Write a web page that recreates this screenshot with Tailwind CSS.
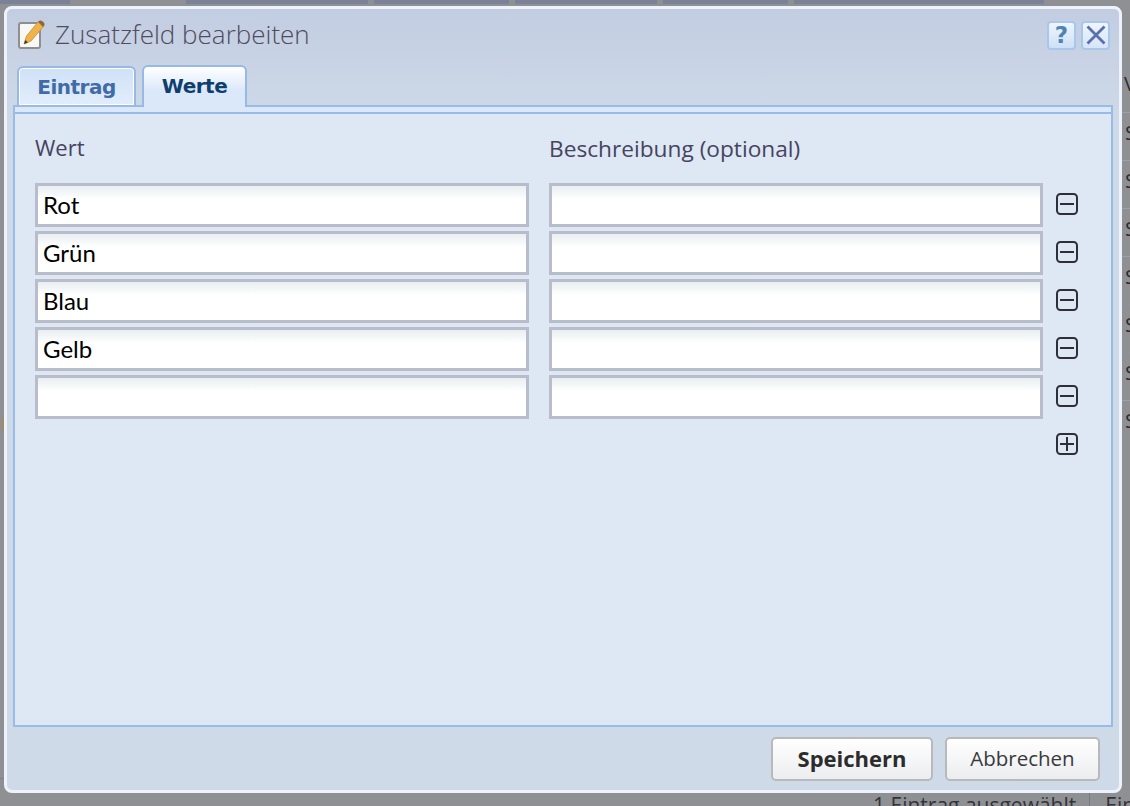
<!DOCTYPE html>
<html lang="de">
<head>
  <meta charset="UTF-8" />
  <title>Zusatzfeld bearbeiten</title>
  <script src="https://cdn.jsdelivr.net/npm/@tailwindcss/browser@4"></script>
</head>
<body class="relative w-[1130px] h-[806px] overflow-hidden bg-[#8f9094] font-['Open_Sans',sans-serif]">

  <!-- page behind the dialog -->
  <div class="absolute left-0 top-0 w-full flex h-[4px] gap-[6px]">
    <div class="w-[70px] bg-[#7b8196]"></div>
    <div class="w-[104px]"></div>
    <div class="w-[182px] bg-[#7b8196]"></div>
    <div class="w-[135px] bg-[#7b8196]"></div>
    <div class="w-[142px] bg-[#7b8196]"></div>
    <div class="w-[125px] bg-[#7b8196]"></div>
    <div class="w-[250px] bg-[#7b8196]"></div>
    <div class="flex-1"></div>
  </div>
  <div class="absolute left-[1124px] top-[71px] text-[20px] leading-[26px] text-[#2c2c2c]">V</div>
  <div class="absolute left-[1122px] top-[112px] w-[8px] flex flex-col">
    <div class="h-[48px] border-t border-[#a0a0a4] pl-[3px] text-[20px] leading-[40px] text-[#2c2c2c]">S</div>
    <div class="h-[48px] border-t border-[#a0a0a4] pl-[3px] text-[20px] leading-[40px] text-[#2c2c2c]">S</div>
    <div class="h-[48px] border-t border-[#a0a0a4] pl-[3px] text-[20px] leading-[40px] text-[#2c2c2c]">S</div>
    <div class="h-[48px] border-t border-[#a0a0a4] pl-[3px] text-[20px] leading-[40px] text-[#2c2c2c]">S</div>
    <div class="h-[48px] border-t border-[#8c92a6] pl-[3px] text-[20px] leading-[40px] text-[#2c2c2c]">S</div>
    <div class="h-[48px] border-t border-[#8c92a6] pl-[3px] text-[20px] leading-[40px] text-[#2c2c2c]">S</div>
    <div class="h-[48px] border-t border-[#a0a0a4] pl-[3px] text-[20px] leading-[40px] text-[#2c2c2c]">S</div>
  </div>
  <div class="absolute left-[2px] top-[417px] w-[2px] h-[13px] bg-[#a88a60]"></div>
  <div class="absolute left-0 top-[778px] w-[4px] h-px bg-[#7b8196]"></div>
  <div class="absolute left-[873px] top-[792px] flex items-center text-[21px] leading-[26px] text-[#33343a] whitespace-nowrap">
    <span>1 Eintrag ausgewählt</span>
    <span class="w-px h-[24px] bg-[#767a86] ml-[13px] mr-[15px]"></span>
    <span>Ein</span>
  </div>

  <!-- dialog -->
  <div class="absolute left-[4px] top-[6px] w-[1118px] h-[787px] flex flex-col rounded-[8px] border-[3px] border-[#eef3fb] bg-gradient-to-b from-[#c3cde2] to-[#cfdae8] to-[15%]">

    <div class="flex items-center justify-between h-[52px] pl-[10px] pr-[9px]">
      <div class="flex items-center gap-[10px]">
        <svg width="28" height="30" viewBox="0 0 28 30">
          <rect x="2" y="3" width="21" height="25" rx="2" fill="#f8f8f6" stroke="#8f8f8f" stroke-width="2" />
          <path d="M7 24 L9.500 16 L21 2 Q23 0 25.500 1.500 L27 3 Q28 5 26 7 L14 21 Z" fill="#f0b34a" stroke="#c68a2c" stroke-width="0.800" />
          <path d="M7 24 L8.300 20 L11 22.500 Z" fill="#4a3a2a" />
          <path d="M21 2 Q23 0 25.500 1.500 L27 3 Q28 5 26 7 Z" fill="#8a6a3c" />
        </svg>
        <span class="text-[26px] font-light text-[#4e4c5e] pb-[2px]">Zusatzfeld bearbeiten</span>
      </div>
      <div class="flex gap-[5px]">
        <button class="w-[29px] h-[29px] rounded-[4px] border-2 border-[#a9c6ec] bg-gradient-to-b from-[#eef5fd] to-[#cde0f6] flex items-center justify-center">
          <span class="font-['DejaVu_Sans',sans-serif] font-bold text-[23px] leading-none text-[#4f83b0]">?</span>
        </button>
        <button class="w-[29px] h-[29px] rounded-[4px] border-2 border-[#a9c6ec] bg-gradient-to-b from-[#eef5fd] to-[#d6e5f8] flex items-center justify-center">
          <svg width="20" height="20" viewBox="0 0 20 20"><path d="M1.500 1.500 L18.500 18.500 M18.500 1.500 L1.500 18.500" stroke="#5a70ad" stroke-width="2.800" /></svg>
        </button>
      </div>
    </div>

    <div class="flex gap-[6px] pl-[10px] h-[46px] items-end relative z-10 -mb-[2px]">
      <div class="w-[119px] h-[39px] mb-[2px] rounded-t-[6px] border-2 border-b-0 border-[#97b9e6] shadow-[inset_0_0_0_1px_#fff] bg-gradient-to-b from-[#d0e1f6] to-[#e2edfb] flex items-center justify-center font-['DejaVu_Sans',sans-serif] font-bold text-[20px] tracking-[-0.5px] text-[#3f6ca6]">Eintrag</div>
      <div class="w-[105px] h-[42px] pb-[2px] rounded-t-[6px] border-2 border-b-0 border-[#97b9e6] bg-gradient-to-b from-white to-[#dbe8fa] to-60% flex items-center justify-center font-['DejaVu_Sans',sans-serif] font-bold text-[20px] tracking-[-0.5px] text-[#0f3f6f]">Werte</div>
    </div>

    <div class="mx-[6px] h-[622px] border-2 border-[#99bbe8] bg-[#dee7f4] flex flex-col">
      <div class="h-[5px] border-b-2 border-[#99bbe8] bg-[#dbe8fa] box-content"></div>
      <div class="flex flex-col pl-[20px] pt-[15px]">
        <div class="flex gap-[20px] h-[40px] text-[#46445e]">
          <span class="w-[494px] text-[22px] leading-[36px]">Wert</span>
          <span class="w-[494px] text-[22.7px] leading-[39px]">Beschreibung (optional)</span>
        </div>
        <div class="flex flex-col gap-[4px] mt-[14px]">
          <div class="flex items-center">
            <input value="Rot" class="w-[494px] h-[44px] pl-[5px] pb-[2px] border-[3px] border-[#b9bccb] bg-gradient-to-b from-[#e9eef0] to-white to-35% font-['Lato',sans-serif] text-[24px] text-black" />
            <input class="ml-[20px] w-[494px] h-[44px] px-[5px] border-[3px] border-[#b9bccb] bg-gradient-to-b from-[#e9eef0] to-white to-35%" />
            <svg class="ml-[12px] -mt-[2px]" width="24" height="24" viewBox="0 0 24 24"><rect x="2" y="2" width="20" height="20" rx="3.500" fill="none" stroke="#2f2f38" stroke-width="2" /><path d="M5 12 H19" stroke="#2f2f38" stroke-width="2" /></svg>
          </div>
          <div class="flex items-center">
            <input value="Grün" class="w-[494px] h-[44px] pl-[5px] pb-[2px] border-[3px] border-[#b9bccb] bg-gradient-to-b from-[#e9eef0] to-white to-35% font-['Lato',sans-serif] text-[24px] text-black" />
            <input class="ml-[20px] w-[494px] h-[44px] px-[5px] border-[3px] border-[#b9bccb] bg-gradient-to-b from-[#e9eef0] to-white to-35%" />
            <svg class="ml-[12px] -mt-[2px]" width="24" height="24" viewBox="0 0 24 24"><rect x="2" y="2" width="20" height="20" rx="3.500" fill="none" stroke="#2f2f38" stroke-width="2" /><path d="M5 12 H19" stroke="#2f2f38" stroke-width="2" /></svg>
          </div>
          <div class="flex items-center">
            <input value="Blau" class="w-[494px] h-[44px] pl-[5px] pb-[2px] border-[3px] border-[#b9bccb] bg-gradient-to-b from-[#e9eef0] to-white to-35% font-['Lato',sans-serif] text-[24px] text-black" />
            <input class="ml-[20px] w-[494px] h-[44px] px-[5px] border-[3px] border-[#b9bccb] bg-gradient-to-b from-[#e9eef0] to-white to-35%" />
            <svg class="ml-[12px] -mt-[2px]" width="24" height="24" viewBox="0 0 24 24"><rect x="2" y="2" width="20" height="20" rx="3.500" fill="none" stroke="#2f2f38" stroke-width="2" /><path d="M5 12 H19" stroke="#2f2f38" stroke-width="2" /></svg>
          </div>
          <div class="flex items-center">
            <input value="Gelb" class="w-[494px] h-[44px] pl-[5px] pb-[2px] border-[3px] border-[#b9bccb] bg-gradient-to-b from-[#e9eef0] to-white to-35% font-['Lato',sans-serif] text-[24px] text-black" />
            <input class="ml-[20px] w-[494px] h-[44px] px-[5px] border-[3px] border-[#b9bccb] bg-gradient-to-b from-[#e9eef0] to-white to-35%" />
            <svg class="ml-[12px] -mt-[2px]" width="24" height="24" viewBox="0 0 24 24"><rect x="2" y="2" width="20" height="20" rx="3.500" fill="none" stroke="#2f2f38" stroke-width="2" /><path d="M5 12 H19" stroke="#2f2f38" stroke-width="2" /></svg>
          </div>
          <div class="flex items-center">
            <input class="w-[494px] h-[44px] px-[5px] border-[3px] border-[#b9bccb] bg-gradient-to-b from-[#e9eef0] to-white to-35%" />
            <input class="ml-[20px] w-[494px] h-[44px] px-[5px] border-[3px] border-[#b9bccb] bg-gradient-to-b from-[#e9eef0] to-white to-35%" />
            <svg class="ml-[12px] -mt-[2px]" width="24" height="24" viewBox="0 0 24 24"><rect x="2" y="2" width="20" height="20" rx="3.500" fill="none" stroke="#2f2f38" stroke-width="2" /><path d="M5 12 H19" stroke="#2f2f38" stroke-width="2" /></svg>
          </div>
          <div class="flex justify-end pr-[32px] h-[44px] items-center">
            <svg class="-mt-[2px]" width="24" height="24" viewBox="0 0 24 24"><rect x="2" y="2" width="20" height="20" rx="3.500" fill="none" stroke="#2f2f38" stroke-width="2" /><path d="M5 12 H19 M12 5 V19" stroke="#2f2f38" stroke-width="2" /></svg>
          </div>
        </div>
      </div>
    </div>

    <div class="flex justify-end gap-[12px] pr-[19px] pt-[10px]">
      <button class="w-[162px] h-[44px] pb-[2px] rounded-[5px] border-2 border-[#b9b9bb] bg-gradient-to-b from-white to-[#ecedef] text-[22px] font-bold text-[#2c2c2e]">Speichern</button>
      <button class="w-[155px] h-[44px] pb-[1px] rounded-[5px] border-2 border-[#b9b9bb] bg-gradient-to-b from-white to-[#ecedef] text-[20.5px] text-[#3a3a3c]">Abbrechen</button>
    </div>
  </div>
</body>
</html>
